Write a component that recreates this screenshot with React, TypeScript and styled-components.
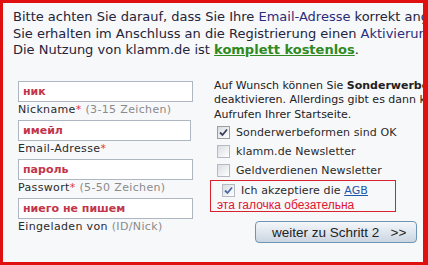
import React, { FC } from "react";
import styled, { createGlobalStyle } from "styled-components";

const Global = createGlobalStyle`
  html, body { margin: 0; padding: 0; background: #f7f8fa; }
  * { box-sizing: border-box; }
`;

const Frame = styled.div`
  width: 428px;
  height: 265px;
  overflow: hidden;
  background: #f7f8fa;
  border-style: solid;
  border-color: #e01010;
  border-width: 3px 5px 3px 3px;
  font-family: "DejaVu Sans", Verdana, sans-serif;
  color: #24243a;
`;

const Intro = styled.div`
  padding: 6px 0 0 10px;
  font-size: 13px;
  line-height: 16.5px;
  white-space: nowrap;
`;

const Blue = styled.span`
  color: #2b2d7a;
`;

const Free = styled.span`
  color: #2f8a1f;
  font-weight: bold;
  text-decoration: underline;
`;

const Columns = styled.div`
  display: grid;
  grid-template-columns: 187px 1fr;
  padding: 22px 0 0 15px;
`;

const LeftCol = styled.div`
  display: flex;
  flex-direction: column;
`;

const Field = styled.div<{ $w: number }>`
  width: ${(p) => p.$w}px;
  height: 21px;
  background: #fff;
  border: 1px solid #aeb7c1;
  padding: 0 4px;
  font-size: 11px;
  line-height: 19px;
  font-weight: bold;
  color: #c2354a;
`;

const Label = styled.div`
  height: 18px;
  font-size: 11px;
  letter-spacing: 0.35px;
  line-height: 16px;
  color: #2a2a2a;
  white-space: nowrap;
`;

const Star = styled.span`
  color: #d9363e;
`;

const Hint = styled.span`
  color: #8a8a8a;
`;

const RightCol = styled.div`
  display: flex;
  flex-direction: column;
  margin-top: -2px;
  white-space: nowrap;
`;

const Info = styled.div`
  padding: 0 0 0 9px;
  font-size: 11px;
  line-height: 14.5px;
  color: #222;
`;

const Options = styled.div`
  display: flex;
  flex-direction: column;
  padding: 1px 0 0 12px;
`;

const Option = styled.label`
  display: flex;
  align-items: center;
  gap: 6px;
  height: 19px;
  font-size: 11px;
  letter-spacing: 0.1px;
  color: #2a2a2a;
`;

const Box = styled.span<{ $dim?: boolean }>`
  flex: none;
  display: inline-flex;
  align-items: center;
  justify-content: center;
  width: 13px;
  height: 13px;
  border: 1px solid ${(p) => (p.$dim ? "#9a9ea6" : "#b4b9c2")};
  background: linear-gradient(135deg, #d9dce2 0%, #f4f5f7 70%, #ffffff 100%);
`;

const Agree = styled.div`
  margin: 0 0 0 -7px;
  width: 186px;
  height: 32px;
  border: 1px solid #d8222c;
  padding: 0 0 0 11px;
  display: flex;
  flex-direction: column;
`;

const Note = styled.div`
  margin-left: -5px;
  font-family: "Liberation Sans", Arial, sans-serif;
  font-size: 12px;
  line-height: 12px;
  color: #e0152f;
`;

const Link = styled.a`
  color: #2255aa;
  text-decoration: underline;
`;

const ButtonRow = styled.div`
  display: flex;
  padding: 9px 0 0 50px;
`;

const Next = styled.button`
  width: 162px;
  height: 22px;
  border: 1px solid #6f93b3;
  border-radius: 4px;
  background: linear-gradient(#f4f7fa 0%, #dfe6ee 50%, #cbd6e2 100%);
  font-family: "Liberation Sans", Arial, sans-serif;
  font-size: 13.5px;
  color: #222;
  text-align: left;
  padding: 0 0 0 16px;
  white-space: pre;
`;

const Check: FC<{ dark?: boolean }> = ({ dark }) => (
  <svg width="9" height="9" viewBox="0 0 9 9">
    <path
      d="M1 4.5 L3.5 7 L8 1.5"
      fill="none"
      stroke={dark ? "#3a3f5a" : "#4a6aa8"}
      strokeWidth="1.8"
    />
  </svg>
);

const fields = [
  { value: "ник", w: 175, label: "Nickname", star: true, hint: " (3-15 Zeichen)" },
  { value: "имейл", w: 173, label: "Email-Adresse", star: true, hint: "" },
  { value: "пароль", w: 175, label: "Passwort", star: true, hint: " (5-50 Zeichen)" },
  { value: "ниего не пишем", w: 175, label: "Eingeladen von ", star: false, hint: "(ID/Nick)" },
];

const App: FC = () => (
  <>
    <Global />
    <Frame>
      <Intro>
        Bitte achten Sie darauf, dass Sie Ihre <Blue>Email-Adresse</Blue> korrekt angeben.
        <br />
        Sie erhalten im Anschluss an die Registrierung einen <Blue>Aktivierungslink</Blue>.
        <br />
        Die Nutzung von klamm.de ist <Free>komplett kostenlos</Free>.
      </Intro>
      <Columns>
        <LeftCol>
          {fields.map((f) => (
            <React.Fragment key={f.label}>
              <Field $w={f.w}>{f.value}</Field>
              <Label>
                {f.label}
                {f.star && <Star>*</Star>}
                <Hint>{f.hint}</Hint>
              </Label>
            </React.Fragment>
          ))}
        </LeftCol>
        <RightCol>
          <Info>
            Auf Wunsch können Sie <b>Sonderwerbeformen</b> auf Ihrer Startseite
            <br />
            deaktivieren. Allerdings gibt es dann keine Punkte für das
            <br />
            Aufrufen Ihrer Startseite.
          </Info>
          <Options>
            <Option>
              <Box $dim>
                <Check dark />
              </Box>
              Sonderwerbeformen sind OK
            </Option>
            <Option>
              <Box />
              klamm.de Newsletter
            </Option>
            <Option>
              <Box />
              Geldverdienen Newsletter
            </Option>
            <Agree>
              <Option>
                <Box>
                  <Check />
                </Box>
                <span>
                  Ich akzeptiere die <Link href="#">AGB</Link>
                </span>
              </Option>
              <Note>эта галочка обезательна</Note>
            </Agree>
          </Options>
          <ButtonRow>
            <Next>{"weiter zu Schritt 2   >>"}</Next>
          </ButtonRow>
        </RightCol>
      </Columns>
    </Frame>
  </>
);

export default App;
